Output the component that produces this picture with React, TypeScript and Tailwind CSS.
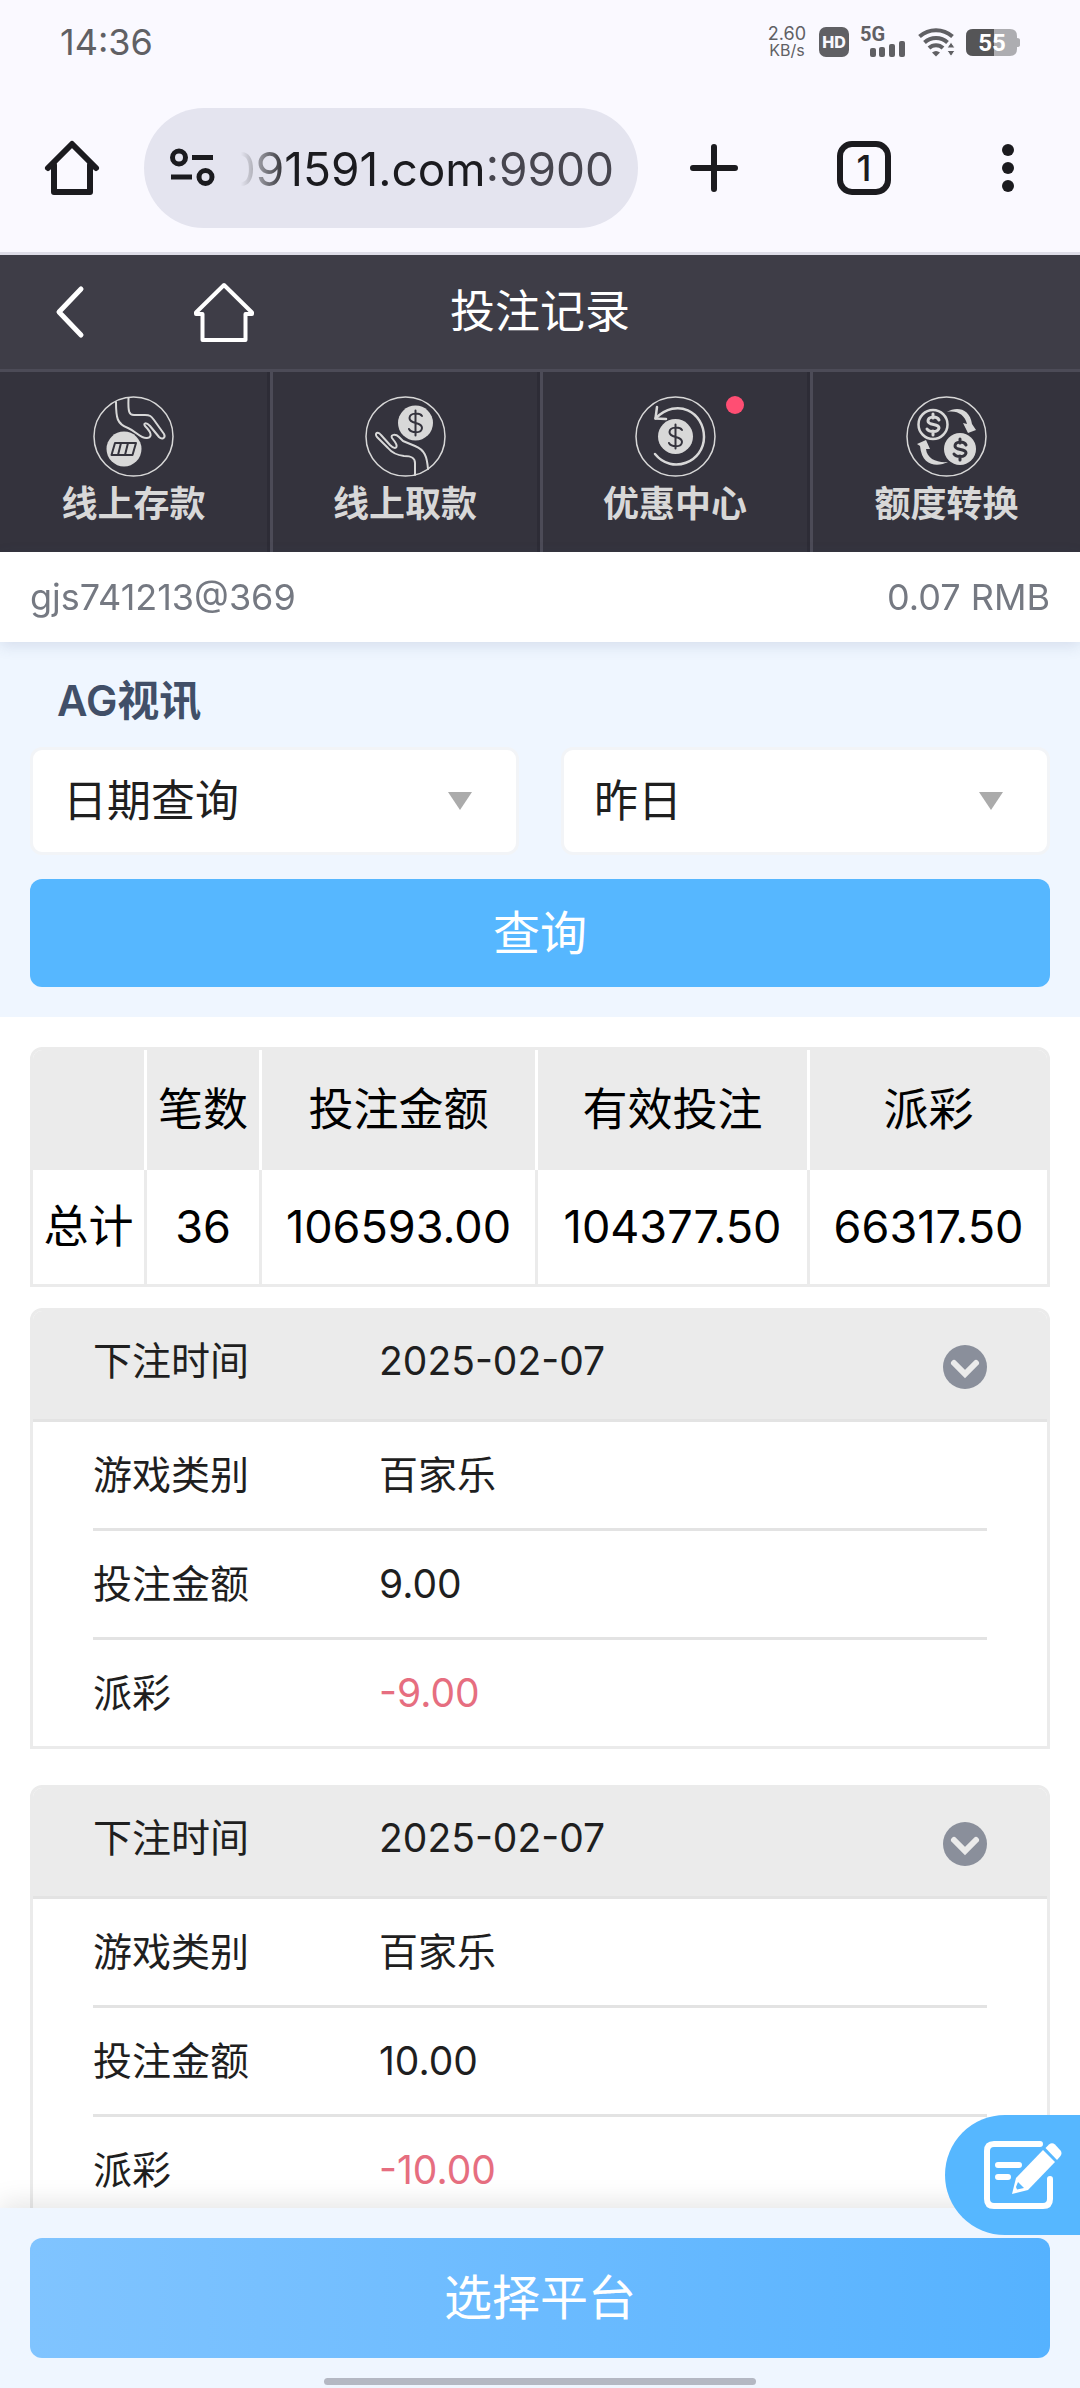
import type { ReactNode } from "react";

type BetRecord = {
  id: number;
  date: string;
  game: string;
  amount: string;
  payout: string;
};

const records: BetRecord[] = [
  { id: 1, date: "2025-02-07", game: "百家乐", amount: "9.00", payout: "-9.00" },
  { id: 2, date: "2025-02-07", game: "百家乐", amount: "10.00", payout: "-10.00" },
];

const summary = [
  { label: "笔数", value: "36", width: "w-[115px]" },
  { label: "投注金额", value: "106593.00", width: "w-[276px]" },
  { label: "有效投注", value: "104377.50", width: "w-[272px]" },
  { label: "派彩", value: "66317.50", width: "" },
];

function WifiIcon() {
  return (
    <svg className="w-[37px] h-[30px]" viewBox="0 0 37 30" fill="none" stroke="#606064" strokeWidth="4">
      <path d="M1.5 9.5C11 1 25 1 34.500 9.500" />
      <path d="M6.500 15.500C13 9.500 23 9.500 29.500 15.500" />
      <path d="M11 21C15 17.200 21 17.200 25 21" />
      <path d="M14 25.500Q18 22.500 22 25.500L18 29.500Z" fill="#606064" stroke="none" />
      <path d="M33 15l4 6h-8zM33 29.500l4-6h-8z" fill="#606064" stroke="#faf9ff" strokeWidth="1" />
    </svg>
  );
}

function StatusBar() {
  return (
    <div className="flex items-center justify-between h-[84px] px-[60px] text-[#606064]">
      <span className="text-[36px] leading-[40px]">14:36</span>
      <div className="flex items-center">
        <div className="mr-[13px] text-center text-[18px] leading-[17px]">
          <div>2.60</div>
          <div className="text-[16px]">KB/s</div>
        </div>
        <span className="w-[30px] h-[30px] mr-3 rounded-[7px] bg-[#606064] text-[#faf9ff] text-[16px] leading-[30px] font-extrabold text-center">
          HD
        </span>
        <svg className="w-[45px] h-[30px] mr-3 overflow-visible" viewBox="0 0 45 30" fill="#606064">
          <text x="-1" y="14" fontSize="20" fontWeight="700" fontFamily="Roboto, sans-serif">5G</text>
          <rect x="9" y="21" width="6" height="9" rx="2" />
          <rect x="18" y="20" width="6" height="10" rx="2" />
          <rect x="28" y="17" width="6" height="13" rx="2" />
          <rect x="38" y="14" width="6" height="16" rx="2" />
        </svg>
        <WifiIcon />
        <svg className="w-[54px] h-[27px] ml-[11px]" viewBox="0 0 54 27">
          <path d="M7 0H44Q51 0 51 7V9Q54 9 54 11V16Q54 18 51 18V20Q51 27 44 27H7Q0 27 0 20V7Q0 0 7 0Z" fill="#adadb1" />
          <path d="M7 0H28V27H7Q0 27 0 20V7Q0 0 7 0Z" fill="#555557" />
          <text x="26" y="22" textAnchor="middle" fontSize="24" fontWeight="700" fill="#fff" fontFamily="Roboto, sans-serif">55</text>
        </svg>
      </div>
    </div>
  );
}

function BrowserBar() {
  return (
    <div className="flex items-center h-[171px] px-[42px] border-b-[3px] border-[#dedde8] text-[#1b1b1f]">
      <button aria-label="主页">
        <svg className="w-[60px] h-[60px]" viewBox="0 0 60 60" fill="none" stroke="currentColor" strokeWidth="6" strokeLinecap="round" strokeLinejoin="round">
          <path d="M6 30L30 6L54 30" />
          <path d="M12 27V54H48V27" />
        </svg>
      </button>
      <button className="flex items-center flex-1 min-w-0 h-[120px] ml-[42px] mr-[46px] pl-[26px] pr-[24px] rounded-full bg-[#e4e4ef]" aria-label="网址">
        <svg className="w-[45px] h-[40px] shrink-0" viewBox="0 0 45 40" fill="none" stroke="currentColor" strokeWidth="5">
          <circle cx="9" cy="9.500" r="6.500" />
          <path d="M22 9.500H43M1 29H22" />
          <circle cx="35.500" cy="29" r="6.500" />
        </svg>
        <span className="flex justify-end flex-1 min-w-0 h-[60px] ml-[26px] overflow-hidden whitespace-nowrap text-[46px] leading-[62px] [mask-image:linear-gradient(to_right,transparent,black_48px)]">
          091591.com<span className="text-[#47464f]">:9900</span>
        </span>
      </button>
      <button aria-label="新建标签页" className="mr-[93px]">
        <svg className="w-[60px] h-[60px]" viewBox="0 0 60 60" stroke="currentColor" strokeWidth="6" strokeLinecap="round">
          <path d="M30 9V51M9 30H51" />
        </svg>
      </button>
      <button className="w-[54px] h-[54px] mr-[87px] rounded-[15px] border-[6px] border-[#1b1b1f] text-[36px] leading-[42px] font-medium">
        1
      </button>
      <button aria-label="更多" className="w-[60px] flex justify-center">
        <svg className="w-[12px] h-[48px]" viewBox="0 0 12 48" fill="currentColor">
          <circle cx="6" cy="6" r="6" />
          <circle cx="6" cy="24" r="6" />
          <circle cx="6" cy="42" r="6" />
        </svg>
      </button>
    </div>
  );
}

function TitleBar() {
  return (
    <header className="grid grid-cols-3 items-center h-[117px] border-b-[3px] border-[#4c4b57] bg-[#3e3d47] text-white">
      <div className="flex items-center pl-[53px]">
        <button aria-label="返回">
          <svg className="w-[33px] h-[54px]" viewBox="0 0 33 54" fill="none" stroke="currentColor" strokeWidth="5" strokeLinecap="round" strokeLinejoin="round">
            <path d="M28 4L6 27L28 50" />
          </svg>
        </button>
        <a href="#home" aria-label="首页" className="ml-[105px]">
          <svg className="w-[66px] h-[66px]" viewBox="0 0 66 66" fill="none" stroke="currentColor" strokeWidth="4" strokeLinejoin="round">
            <path d="M33 6L61 33.500V35H54.500V61H11.500V35H5V33.500Z" />
          </svg>
        </a>
      </div>
      <h1 className="text-center text-[45px] leading-[60px]">投注记录</h1>
    </header>
  );
}

function DepositIcon() {
  return (
    <>
      <path d="M23 6C23 22 24 28 35 32C44 36 48 43 54 42C60 41 58 36 52 30C50 27 53 26 57 30L66 41C69 44 73 42 71 38L61 24C58 20 57 19 52 19L41 19C36 19 35 16 35.500 2" />
      <circle cx="31" cy="53" r="17.500" fill="#d8d8d8" stroke="none" />
      <path d="M22 47H43L39.500 59H18.500ZM28 47L25 59M35 47L32 59" stroke="#34333d" />
    </>
  );
}

function WithdrawIcon() {
  return (
    <>
      <circle cx="50.500" cy="27" r="17.500" fill="#d8d8d8" stroke="none" />
      <path d="M57 20C55 17 45 16 44.500 22C44.500 29 57 25 57 32C56.500 38 46 37 44 33M50.500 14.500V39.500" stroke="#34333d" />
      <path d="M50 79V67C50 62 47 60 39 60C31 59 27 57 23 52L12 41C9 37 13 35 16 39L25 49C30 54 34 52 30 46L27 42C25 38 31 38 34 41L38 45L50 50C60 54 62 61 63 73" />
    </>
  );
}

function PromoIcon() {
  return (
    <>
      <path d="M20.500 22.500C42 1 69 16 69 41C69 66 37 79 20 58" strokeWidth="2.500" />
      <path d="M22 11L20.500 22.500L31 23" strokeWidth="2.500" />
      <circle cx="40.500" cy="40.500" r="17.500" fill="#d8d8d8" stroke="none" />
      <path d="M47 34C45 31 35 30 34.500 36C34.500 43 47 39 47 46C46.500 52 36 51 34 47M40.500 28.500V52.500" stroke="#34333d" />
    </>
  );
}

function TransferIcon() {
  return (
    <>
      <circle cx="27" cy="28.500" r="14.500" strokeWidth="2.500" />
      <path d="M33 24C31 20 22 20 22 25C22 30 33 27 33 32C32 37 23 36 21 33M27 18V22M27 35V39" strokeWidth="3" />
      <circle cx="54" cy="53" r="16" fill="#d8d8d8" stroke="none" />
      <path d="M60 49C58 45 49 45 49 50C49 55 60 52 60 57C59 62 50 61 48 58M54 43V47M54 60V64" stroke="#34333d" strokeWidth="3" />
      <path d="M41 16C50 10 64 12 66 28L70 34L62 37L57 27L61 28C59 19 51 14 41 16Z" fill="#d8d8d8" stroke="none" />
      <path d="M42 66C32 71 16 71 14 50L11 48L20 44L24 53L20 53C21 63 31 67 42 66Z" fill="#d8d8d8" stroke="none" />
    </>
  );
}

type NavItemProps = { label: string; children: ReactNode; dot?: boolean };

function NavItem({ label, children, dot }: NavItemProps) {
  return (
    <a
      href="#nav"
      className="flex flex-col items-center pt-6 border-x-[3px] border-l-[#4c4b57] border-r-[#2d2c36] first:border-l-0 last:border-r-0"
    >
      <span className="relative">
        <svg className="w-[81px] h-[81px]" viewBox="0 0 81 81" fill="none" stroke="#d8d8d8" strokeWidth="2" strokeLinecap="round" strokeLinejoin="round">
          <circle cx="40.500" cy="40.500" r="39.500" strokeWidth="1.500" />
          {children}
        </svg>
        {dot && <span className="absolute top-0 -right-[28px] w-[18px] h-[18px] rounded-full bg-[#ff4e73]" />}
      </span>
      <span className="text-[36px] leading-[54px] font-bold">{label}</span>
    </a>
  );
}

function NavTabs() {
  return (
    <nav className="grid grid-cols-4 h-[180px] bg-[#34333d] text-[#d8d8d8]">
      <NavItem label="线上存款"><DepositIcon /></NavItem>
      <NavItem label="线上取款"><WithdrawIcon /></NavItem>
      <NavItem label="优惠中心" dot><PromoIcon /></NavItem>
      <NavItem label="额度转换"><TransferIcon /></NavItem>
    </nav>
  );
}

function SelectBox({ label, options }: { label: string; options: string[] }) {
  return (
    <div className="relative flex-1">
      <select
        aria-label={label}
        className="block w-full h-[108px] pl-[30px] pr-[90px] rounded-[12px] border-[3px] border-[#f2f4f7] bg-white text-[#1f1f1f] text-[44px] appearance-none"
      >
        {options.map((o) => (
          <option key={o}>{o}</option>
        ))}
      </select>
      <svg className="absolute right-[47px] top-[45px] w-6 h-[18px] pointer-events-none" viewBox="0 0 24 18" fill="#ababab">
        <path d="M0 0H24L12 18Z" />
      </svg>
    </div>
  );
}

function Filters() {
  return (
    <section className="h-[375px] px-[30px] pt-[29px] bg-[#eff6ff]">
      <h2 className="pl-[27px] mb-4 text-[42px] leading-[60px] font-semibold text-[#414f68]">AG视讯</h2>
      <div className="flex gap-[42px] mb-6">
        <SelectBox label="查询方式" options={["日期查询"]} />
        <SelectBox label="日期" options={["昨日", "今日"]} />
      </div>
      <button className="block w-full h-[108px] rounded-[12px] bg-[#56b7ff] text-white text-[47px]">查询</button>
    </section>
  );
}

function SummaryTable() {
  return (
    <div className="mx-[30px] mt-[30px] mb-[21px] rounded-t-[12px] border-[3px] border-[#ebebeb] overflow-hidden">
      <table className="w-full table-fixed border-separate border-spacing-0 text-center text-black text-[45px]">
        <thead>
          <tr className="h-[120px] bg-[#ebebeb]">
            <td className="w-[111px]" />
            {summary.map((s) => (
              <th key={s.label} scope="col" className={`${s.width} p-0 border-l-[3px] border-white font-normal`}>
                {s.label}
              </th>
            ))}
          </tr>
        </thead>
        <tbody>
          <tr className="h-[114px]">
            <th scope="row" className="p-0 font-normal">总计</th>
            {summary.map((s) => (
              <td key={s.label} className="p-0 border-l-[3px] border-[#ebebeb]">{s.value}</td>
            ))}
          </tr>
        </tbody>
      </table>
    </div>
  );
}

function RecordRow({ label, value, negative }: { label: string; value: string; negative?: boolean }) {
  return (
    <div className="flex items-center h-[109px] border-b-[3px] border-[#e3e3e3] last:h-[106px] last:border-b-0">
      <dt className="w-[286px]">{label}</dt>
      <dd className={negative ? "text-[#e66e80]" : ""}>{value}</dd>
    </div>
  );
}

function RecordCard({ record }: { record: BetRecord }) {
  return (
    <article className="mx-[30px] mb-9 rounded-t-[12px] border-[3px] border-[#ebebeb] text-[#1f1f1f] text-[39px] leading-[54px]">
      <div className="flex items-center h-[111px] px-[60px] border-b-[3px] border-[#e3e3e3] rounded-t-[9px] bg-[#ebebeb]">
        <span className="w-[286px] pb-2">下注时间</span>
        <span className="pb-2">{record.date}</span>
        <button aria-label="展开" className="ml-auto pt-1">
          <svg className="w-11 h-11" viewBox="0 0 44 44">
            <circle cx="22" cy="22" r="22" fill="#8a8f9b" />
            <path d="M11 18L22 29L33 18" fill="none" stroke="#ebebeb" strokeWidth="6" strokeLinecap="round" />
          </svg>
        </button>
      </div>
      <dl className="px-[60px]">
        <RecordRow label="游戏类别" value={record.game} />
        <RecordRow label="投注金额" value={record.amount} />
        <RecordRow label="派彩" value={record.payout} negative={record.payout.startsWith("-")} />
      </dl>
    </article>
  );
}

function NoteIcon() {
  return (
    <svg className="w-[81px] h-[71px]" viewBox="0 0 81 71" fill="none" stroke="#fff" strokeWidth="6" strokeLinecap="round" strokeLinejoin="round">
      <path d="M57 4H11Q4 4 4 11V59Q4 66 11 66H60Q67 66 67 59V39" />
      <path d="M15 25H36M15 37H25" />
      <path d="M60 10L72 22L45 50L29 54L33 38Z" fill="#fff" stroke="none" />
      <path d="M35 42L41 48L34 49.500L33 47Z" fill="#56b7ff" stroke="none" />
      <path d="M62.500 8L66 4.500Q69 2 72 4.500L77.500 10.500Q79.500 13 77.500 16L74 20Z" fill="#fff" stroke="none" />
    </svg>
  );
}

function BottomBar() {
  return (
    <footer className="relative h-[180px] px-[30px] pt-[30px] bg-[#eff6ff] shadow-[0_-6px_24px_rgba(0,0,0,0.1)]">
      <button aria-label="注单备注" className="absolute right-0 -top-[93px] flex items-center w-[135px] h-[120px] pl-[38px] rounded-l-full bg-[#56b7ff]">
        <NoteIcon />
      </button>
      <button className="block w-full h-[120px] rounded-[12px] bg-linear-to-r from-[#80c4ff] to-[#55b2ff] text-white text-[48px]">
        选择平台
      </button>
      <div className="mx-auto mt-5 w-[432px] h-[7px] rounded-full bg-[#b4b8c3]" />
    </footer>
  );
}

export default function App() {
  return (
    <div lang="zh-CN" className="flex flex-col h-screen bg-[#faf9ff] font-['Inter','Noto_Sans_CJK_SC',sans-serif]">
      <StatusBar />
      <BrowserBar />
      <TitleBar />
      <NavTabs />
      <div className="relative flex items-center justify-between shrink-0 h-[90px] px-[30px] bg-white text-[36px] text-[#757982] shadow-[0_4px_14px_rgba(60,80,120,0.14)]">
        <span>gjs741213@369</span>
        <span>0.07 RMB</span>
      </div>
      <main className="flex-1 min-h-0 overflow-y-auto bg-white [scrollbar-width:none]">
        <Filters />
        <SummaryTable />
        {records.map((record) => (
          <RecordCard key={record.id} record={record} />
        ))}
      </main>
      <BottomBar />
    </div>
  );
}
